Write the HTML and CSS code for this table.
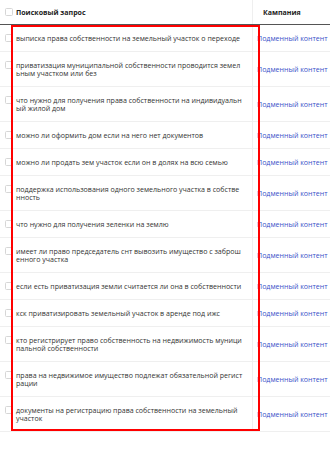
FILE: index.html
```html
<!DOCTYPE html>
<html lang="ru">
<head>
<meta charset="utf-8">
<link rel="stylesheet" href="styles.css">
</head>
<body>
<div class="page">
  <div class="table">
    <div class="row head">
      <div class="cell query"><span class="cb"></span><span class="htext">Поисковый запрос</span></div>
      <div class="cell camp"><span class="htext">Кампания</span></div>
    </div>
    <div class="row"><div class="cell query"><span class="cb"></span><span class="qtext">выписка права собственности на земельный участок о переходе</span></div><div class="cell camp"><span class="link">Подменный контент</span></div></div>
    <div class="row"><div class="cell query"><span class="cb"></span><span class="qtext">приватизация муниципальной собственности проводится земельным участком или без</span></div><div class="cell camp"><span class="link">Подменный контент</span></div></div>
    <div class="row"><div class="cell query"><span class="cb"></span><span class="qtext">что нужно для получения права собственности на индивидуальный жилой дом</span></div><div class="cell camp"><span class="link">Подменный контент</span></div></div>
    <div class="row"><div class="cell query"><span class="cb"></span><span class="qtext">можно ли оформить дом если на него нет документов</span></div><div class="cell camp"><span class="link">Подменный контент</span></div></div>
    <div class="row"><div class="cell query"><span class="cb"></span><span class="qtext">можно ли продать зем участок если он в долях на всю семью</span></div><div class="cell camp"><span class="link">Подменный контент</span></div></div>
    <div class="row"><div class="cell query"><span class="cb"></span><span class="qtext">поддержка использования одного земельного участка в собственность</span></div><div class="cell camp"><span class="link">Подменный контент</span></div></div>
    <div class="row"><div class="cell query"><span class="cb"></span><span class="qtext">что нужно для получения зеленки на землю</span></div><div class="cell camp"><span class="link">Подменный контент</span></div></div>
    <div class="row"><div class="cell query"><span class="cb"></span><span class="qtext">имеет ли право председатель снт вывозить имущество с заброшенного участка</span></div><div class="cell camp"><span class="link">Подменный контент</span></div></div>
    <div class="row"><div class="cell query"><span class="cb"></span><span class="qtext">если есть приватизация земли считается ли она в собственности</span></div><div class="cell camp"><span class="link">Подменный контент</span></div></div>
    <div class="row"><div class="cell query"><span class="cb"></span><span class="qtext">кск приватизировать земельный участок в аренде под ижс</span></div><div class="cell camp"><span class="link">Подменный контент</span></div></div>
    <div class="row"><div class="cell query"><span class="cb"></span><span class="qtext">кто регистрирует право собственность на недвижимость муниципальной собственности</span></div><div class="cell camp"><span class="link">Подменный контент</span></div></div>
    <div class="row"><div class="cell query"><span class="cb"></span><span class="qtext">права на недвижимое имущество подлежат обязательной регистрации</span></div><div class="cell camp"><span class="link">Подменный контент</span></div></div>
    <div class="row"><div class="cell query"><span class="cb"></span><span class="qtext">документы на регистрацию права собственности на земельный участок</span></div><div class="cell camp"><span class="link">Подменный контент</span></div></div>
  </div>
  <div class="highlight"></div>
</div>
</body>
</html>
```
FILE: styles.css
```css
html, body {
  margin: 0;
  padding: 0;
  background: #fff;
}
body {
  font-family: "Open Sans", "Noto Sans", sans-serif;
  font-size: 7.05px;
  color: #333;
  width: 330px;
  height: 452px;
  overflow: hidden;
}
.page {
  position: relative;
  width: 330px;
}
.table {
  display: flex;
  flex-direction: column;
}
.row {
  display: grid;
  grid-template-columns: 252px 1fr;
  border-bottom: 1px solid #efefef;
}
.row.head {
  height: 24px;
  border-bottom: 1px solid #555;
}
.cell {
  display: flex;
  line-height: 8px;
}
.cell.query {
  gap: 3px;
  padding: 9px 9.5px 9px 5px;
  align-items: flex-start;
}
.cell.camp {
  align-items: center;
  padding-left: 4px;
  border-left: 1px solid #efefef;
  white-space: nowrap;
  overflow: hidden;
}
.head .cell.query {
  align-items: center;
  padding-top: 0;
  padding-bottom: 0;
}
.head .cell.camp {
  padding-left: 10px;
}
.cb {
  flex: none;
  width: 6px;
  height: 6px;
  border: 1px solid #d6d6d6;
  border-radius: 1.5px;
  background: #fff;
  margin-top: 0;
}
.htext {
  font-weight: 700;
  color: #222;
}
.qtext {
  word-break: break-all;
}
.link {
  color: #3a4fc9;
}
.highlight {
  position: absolute;
  left: 11px;
  top: 25px;
  width: 249px;
  height: 406px;
  box-sizing: border-box;
  border: 2.5px solid #ff0000;
}
```
